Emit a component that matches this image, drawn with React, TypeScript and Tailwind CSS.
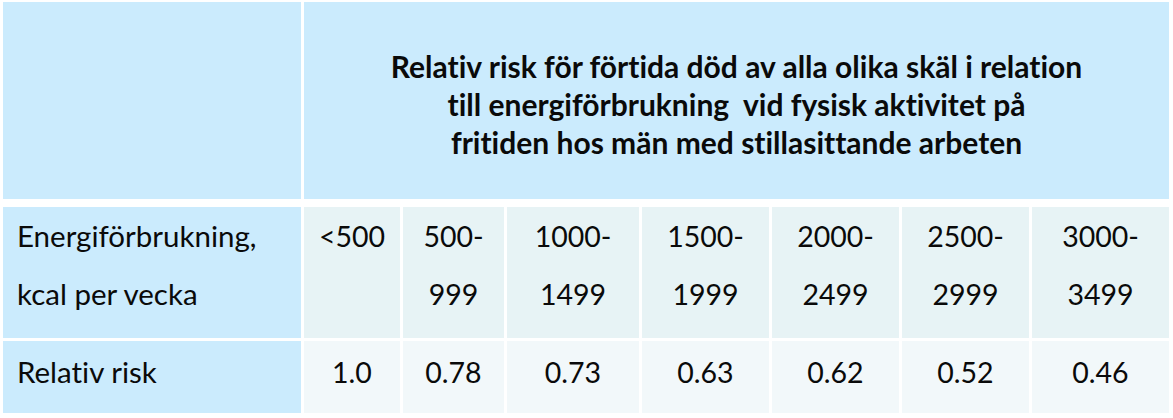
import React from 'react';

const ranges = [
  ['<500', ''],
  ['500-', '999'],
  ['1000-', '1499'],
  ['1500-', '1999'],
  ['2000-', '2499'],
  ['2500-', '2999'],
  ['3000-', '3499'],
];

const risks = ['1.0', '0.78', '0.73', '0.63', '0.62', '0.52', '0.46'];

const cols =
  'grid grid-cols-[298px_96px_101px_132px_127px_127px_127px_137px] gap-x-[3px]';

export default function App() {
  return (
    <div
      className="w-[1173px] h-[418px] bg-white pt-[2px] pl-[3px] text-[#0a0a0a] [font-variant-ligatures:none]"
      style={{ fontFamily: 'Lato, "Open Sans", sans-serif' }}
    >
      <div className="w-[1166px] flex flex-col">
        {/* header */}
        <div className="flex gap-x-[3px] h-[197px]">
          <div className="w-[298px] bg-[#cbebfd]" />
          <div className="flex-1 bg-[#cbebfd] pt-[45px] text-center font-bold text-[30px] leading-[38px]">
            <p>Relativ risk för förtida död av alla olika skäl i relation</p>
            <p>till energiförbrukning&nbsp; vid fysisk aktivitet på</p>
            <p>fritiden hos män med stillasittande arbeten</p>
          </div>
        </div>

        {/* energy row */}
        <div className={`${cols} mt-[8px] h-[131px] text-[28.5px] leading-[58px]`}>
          <div className="bg-[#cbebfd] pl-[14px] text-[29.5px]">
            <p>Energiförbrukning,</p>
            <p>kcal per vecka</p>
          </div>
          {ranges.map(([a, b], i) => (
            <div key={i} className="bg-[#e7f3f5] text-center">
              <p>{a}</p>
              {b && <p>{b}</p>}
            </div>
          ))}
        </div>

        {/* risk row */}
        <div className={`${cols} mt-[3px] h-[72px] text-[28.5px] leading-[58px]`}>
          <div className="bg-[#cbebfd] pl-[14px] pt-[2px] text-[29.5px]">Relativ risk</div>
          {risks.map((r, i) => (
            <div key={i} className="bg-[#f2f8fa] text-center pt-[2px]">
              {r}
            </div>
          ))}
        </div>
      </div>
    </div>
  );
}
